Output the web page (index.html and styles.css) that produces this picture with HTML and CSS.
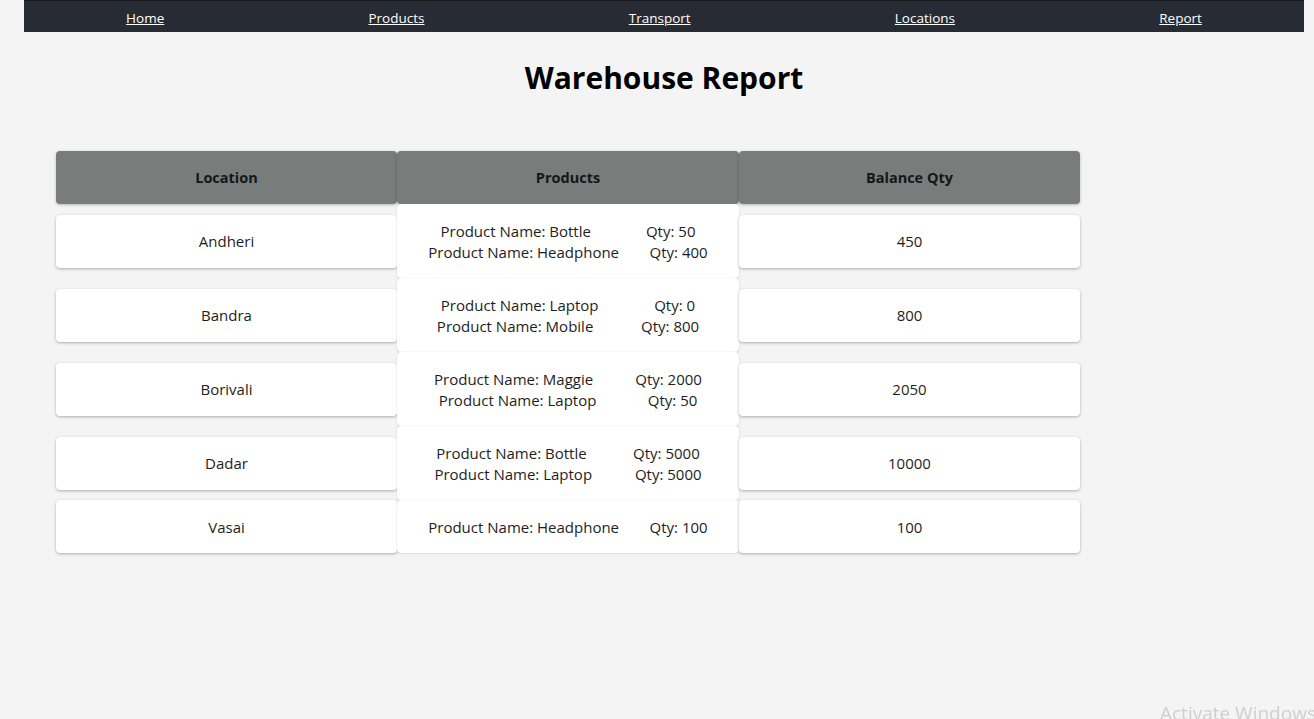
FILE: index.html
```html
<!DOCTYPE html>
<html lang="en">
<head>
<meta charset="utf-8">
<title>Warehouse Report</title>
<link rel="stylesheet" href="styles.css">
</head>
<body>
<div class="page">
  <nav class="nav">
    <a href="#">Home</a>
    <a href="#">Products</a>
    <a href="#">Transport</a>
    <a href="#">Locations</a>
    <a href="#">Report</a>
  </nav>
  <h1 class="title">Warehouse Report</h1>
  <div class="report">
    <div class="head">Location</div>
    <div class="head">Products</div>
    <div class="head">Balance Qty</div>

    <div class="card">Andheri</div>
    <div class="prod">
      <div class="line"><span>Product Name: Bottle</span><span>Qty: 50</span></div>
      <div class="line"><span>Product Name: Headphone</span><span>Qty: 400</span></div>
    </div>
    <div class="card">450</div>

    <div class="card">Bandra</div>
    <div class="prod">
      <div class="line"><span>Product Name: Laptop</span><span>Qty: 0</span></div>
      <div class="line"><span>Product Name: Mobile</span><span>Qty: 800</span></div>
    </div>
    <div class="card">800</div>

    <div class="card">Borivali</div>
    <div class="prod">
      <div class="line"><span>Product Name: Maggie</span><span>Qty: 2000</span></div>
      <div class="line"><span>Product Name: Laptop</span><span>Qty: 50</span></div>
    </div>
    <div class="card">2050</div>

    <div class="card">Dadar</div>
    <div class="prod">
      <div class="line"><span>Product Name: Bottle</span><span>Qty: 5000</span></div>
      <div class="line"><span>Product Name: Laptop</span><span>Qty: 5000</span></div>
    </div>
    <div class="card">10000</div>

    <div class="card">Vasai</div>
    <div class="prod">
      <div class="line"><span>Product Name: Headphone</span><span>Qty: 100</span></div>
    </div>
    <div class="card">100</div>
  </div>
</div>
<div class="watermark">Activate Windows</div>
</body>
</html>
```
FILE: styles.css
```css
html, body {
  margin: 0;
  padding: 0;
  background: #f4f4f4;
  height: 100%;
  overflow: hidden;
}
body {
  font-family: "Open Sans", "Noto Sans", sans-serif;
  color: #1e1e1e;
}
.page {
  margin: 0 10px 0 24px;
}
.nav {
  display: flex;
  justify-content: space-around;
  align-items: center;
  height: 32px;
  background: #272b33;
  border-top: 1px solid #17191d;
  box-sizing: border-box;
  font-size: 13.5px;
}
.nav a {
  color: #ffffff;
  text-decoration: underline;
  padding-top: 2px;
}
.title {
  margin: 24px 0 0;
  text-align: center;
  font-size: 30px;
  font-weight: 700;
  color: #000;
  line-height: 44px;
}
.report {
  display: grid;
  grid-template-columns: 341px 342px 341px;
  align-items: center;
  width: 1024px;
  margin: 51px 0 0 32px;
}
.head {
  height: 53px;
  display: flex;
  align-items: center;
  justify-content: center;
  background: #787d7c;
  border-radius: 4px;
  box-shadow: 0 1px 3px rgba(0, 0, 0, 0.25);
  font-weight: 700;
  font-size: 14.5px;
  color: #161616;
}
.card {
  height: 53px;
  display: flex;
  align-items: center;
  justify-content: center;
  background: #fff;
  border-radius: 4px;
  box-shadow: 0 1px 3px rgba(0, 0, 0, 0.3);
  font-size: 15px;
}
.prod {
  background: #fff;
  border-radius: 4px;
  box-shadow: 0 0 1px rgba(0, 0, 0, 0.25), 0 1px 2px rgba(0, 0, 0, 0.08);
  padding: 17px 16px 15px;
  font-size: 15px;
  line-height: 21px;
}
.line {
  display: flex;
  justify-content: space-around;
}
.watermark {
  position: fixed;
  left: 1160px;
  top: 700px;
  font-size: 19px;
  color: #cfcfcf;
  font-family: "Open Sans", sans-serif;
  white-space: nowrap;
}
```
